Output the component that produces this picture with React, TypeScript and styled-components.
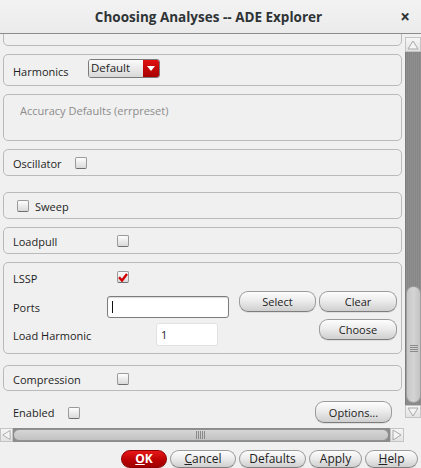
import React from "react";
import styled, { createGlobalStyle } from "styled-components";

const Global = createGlobalStyle`
  html, body { margin: 0; padding: 0; }
  body { background: #efefef; font-family: "Open Sans", "Noto Sans", sans-serif; }
`;

const Window = styled.div`
  width: 421px;
  height: 468px;
  display: flex;
  flex-direction: column;
  background: #f0f0f0;
  overflow: hidden;
  color: #1e1e1e;
`;

const TitleBar = styled.div`
  flex: none;
  height: 33px;
  display: grid;
  grid-template-columns: 1fr auto 1fr;
  align-items: center;
  background: linear-gradient(#f3f3f3, #ebebeb);
  border-bottom: 1px solid #8c8c8c;
`;

const Title = styled.div`
  grid-column: 2;
  font-size: 13.5px;
  font-weight: 700;
  color: #2e3436;
  margin-right: 4px;
`;

const Close = styled.div`
  justify-self: end;
  margin-right: 11px;
  font-size: 17px;
  font-weight: 700;
  color: #2e3436;
  line-height: 1;
`;

const Body = styled.div`
  flex: none;
  height: 394px;
  display: flex;
`;

const Viewport = styled.div`
  flex: 1;
  overflow: hidden;
  padding: 0 2px 0 3px;
`;

const Content = styled.div`
  margin-top: -19px;
  display: flex;
  flex-direction: column;
`;

const Frame = styled.div<{ $h: number; $mt?: number; $pl?: number; $align?: string }>`
  box-sizing: border-box;
  height: ${(p) => p.$h}px;
  margin-top: ${(p) => p.$mt ?? 8}px;
  border: 1px solid #bababa;
  border-radius: 5px;
  padding-left: ${(p) => p.$pl ?? 9}px;
  display: flex;
  align-items: ${(p) => p.$align ?? "center"};
`;

const FrameCol = styled.div`
  box-sizing: border-box;
  height: 92px;
  margin-top: 8px;
  border: 1px solid #bababa;
  border-radius: 5px;
  padding: 4px 0 0 9px;
  display: flex;
  flex-direction: column;
`;

const Label = styled.span<{ $w?: number; $mt?: number; $ml?: number }>`
  flex: none;
  font-size: 11px;
  line-height: 16px;
  width: ${(p) => (p.$w ? `${p.$w}px` : "auto")};
  margin-top: ${(p) => p.$mt ?? 0}px;
  margin-left: ${(p) => p.$ml ?? 0}px;
  white-space: nowrap;
`;

const Hint = styled.span`
  font-size: 11px;
  line-height: 16px;
  color: #8c8c8c;
  margin-top: 8px;
`;

const Box = styled.span<{ $ml?: number; $mt?: number }>`
  box-sizing: border-box;
  flex: none;
  width: 12px;
  height: 12px;
  margin-left: ${(p) => p.$ml ?? 0}px;
  margin-top: ${(p) => p.$mt ?? 0}px;
  border: 1px solid #9a9a9a;
  border-bottom-color: #6e6e6e;
  border-radius: 2px;
  background: linear-gradient(#fdfdfd, #d9d9d9);
  display: flex;
  align-items: center;
  justify-content: center;
`;

const Check = ({ checked, ml, mt }: { checked?: boolean; ml?: number; mt?: number }) => (
  <Box $ml={ml} $mt={mt}>
    {checked && (
      <svg width="10" height="9" viewBox="0 0 10 9">
        <path d="M1 4.2 L4 7.5 L9 1" fill="none" stroke="#d00000" strokeWidth="2.4" />
      </svg>
    )}
  </Box>
);

const Combo = styled.div`
  box-sizing: border-box;
  display: flex;
  width: 72px;
  height: 19px;
  border: 1px solid #7a7a7a;
  border-radius: 3px;
  overflow: hidden;
`;

const ComboText = styled.span`
  flex: 1;
  font-size: 11.5px;
  line-height: 16px;
  padding-left: 2px;
  background: linear-gradient(#fbfbfb, #d8d8d8);
`;

const ComboArrow = styled.span`
  width: 16px;
  background: linear-gradient(#e01010, #a80000);
  display: flex;
  align-items: center;
  justify-content: center;
`;

const Row = styled.div<{ $h: number }>`
  display: flex;
  height: ${(p) => p.$h}px;
  align-items: flex-start;
`;

const Input = styled.div<{ $w: number; $h: number; $mt?: number; $strong?: boolean }>`
  box-sizing: border-box;
  flex: none;
  width: ${(p) => p.$w}px;
  height: ${(p) => p.$h}px;
  margin-top: ${(p) => p.$mt ?? 0}px;
  background: #fff;
  border: 1px solid ${(p) => (p.$strong ? "#7c7c7c" : "#e2e2e2")};
  border-radius: 3px;
  box-shadow: ${(p) => (p.$strong ? "inset 0 1px 1px rgba(0,0,0,0.15)" : "none")};
  font-size: 11px;
  line-height: 18px;
  padding-left: 4px;
  display: flex;
  align-items: center;
`;

const Caret = styled.span`
  width: 1px;
  height: 12px;
  background: #111;
`;

const Button = styled.button<{ $w: number; $h?: number; $ml?: number; $mt?: number }>`
  box-sizing: border-box;
  flex: none;
  width: ${(p) => p.$w}px;
  height: ${(p) => p.$h ?? 21}px;
  margin-left: ${(p) => p.$ml ?? 0}px;
  margin-top: ${(p) => p.$mt ?? 0}px;
  padding: 0;
  border: 1px solid #9b9b9b;
  border-bottom-color: #7d7d7d;
  border-radius: 9px;
  background: linear-gradient(#fdfdfd 0%, #ececec 45%, #cfcfcf 100%);
  box-shadow: 0 1px 0 rgba(0, 0, 0, 0.08);
  font-family: "Open Sans", sans-serif;
  font-size: 11px;
  color: #222;
`;

const BarButton = styled(Button)<{ $ok?: boolean }>`
  font-size: 12px;
  line-height: 16px;
  ${(p) =>
    p.$ok
      ? `background: linear-gradient(#e81818, #b80000 60%, #a00000);
         border-color: #8a0000;
         color: #fff;
         font-weight: 700;`
      : ""}
`;

const EnabledRow = styled.div`
  display: flex;
  align-items: center;
  height: 22px;
  margin-top: 10px;
  padding: 0 10px;
`;

const Spacer = styled.div`
  flex: 1;
`;

const VScroll = styled.div`
  flex: none;
  width: 16px;
  margin-left: 1px;
  padding: 3px 0 10px;
  display: flex;
  flex-direction: column;
`;

const Arrow = styled.div<{ $w?: number; $h?: number }>`
  box-sizing: border-box;
  flex: none;
  width: ${(p) => p.$w ?? 16}px;
  height: ${(p) => p.$h ?? 15}px;
  background: linear-gradient(#f6f6f6, #e2e2e2);
  border: 1px solid #c4c4c4;
  display: flex;
  align-items: center;
  justify-content: center;
`;

const VTrough = styled.div`
  flex: 1;
  background: repeating-linear-gradient(90deg, #8e8e8e 0 1px, #878787 1px 2px);
  display: flex;
  flex-direction: column;
  justify-content: flex-end;
  border-left: 1px solid #7c7c7c;
`;

const VThumb = styled.div`
  box-sizing: border-box;
  height: 117px;
  margin-bottom: 2px;
  border: 1px solid #a0a0a0;
  border-radius: 8px;
  background: linear-gradient(90deg, #c6c6c6, #d4d4d4 50%, #c4c4c4);
  display: flex;
  align-items: center;
  justify-content: center;
  padding-top: 9px;
`;

const HRow = styled.div`
  flex: none;
  height: 14px;
  display: flex;
`;

const HScroll = styled.div`
  width: 404px;
  display: flex;
`;

const HTrough = styled.div`
  flex: 1;
  background: #8c8c8c;
  display: flex;
  padding: 1px 1px 1px 0;
`;

const HThumb = styled.div`
  box-sizing: border-box;
  flex: 1;
  border: 1px solid #8f8f8f;
  border-radius: 7px;
  background: linear-gradient(#d6d6d6, #c2c2c2);
  display: flex;
  align-items: center;
  justify-content: center;
`;

const ButtonBar = styled.div`
  flex: 1;
  display: flex;
  justify-content: flex-end;
  align-items: flex-start;
  gap: 3px;
  padding: 8px 3px 0 0;
`;

const Grip = ({ vertical }: { vertical?: boolean }) =>
  vertical ? (
    <svg width="8" height="8" viewBox="0 0 8 8">
      {[1, 3, 5, 7].map((y) => (
        <line key={y} x1="0" x2="8" y1={y - 0.5} y2={y - 0.5} stroke="#8a8a8a" strokeWidth="1" />
      ))}
    </svg>
  ) : (
    <svg width="10" height="8" viewBox="0 0 10 8">
      {[1, 3, 5, 7, 9].map((x) => (
        <line key={x} y1="0" y2="8" x1={x - 0.5} x2={x - 0.5} stroke="#8a8a8a" strokeWidth="1" />
      ))}
    </svg>
  );

const Tri = ({ dir }: { dir: "up" | "down" | "left" | "right" }) => {
  const pts = {
    up: "1,10 6,2 11,10",
    down: "1,2 6,10 11,2",
    left: "10,1 2,6 10,11",
    right: "2,1 10,6 2,11",
  }[dir];
  return (
    <svg width="12" height="12" viewBox="0 0 12 12">
      <polygon points={pts} fill="#f4f4f4" stroke="#a8a8a8" strokeWidth="1" />
    </svg>
  );
};

export default function App() {
  return (
    <>
      <Global />
      <Window>
        <TitleBar>
          <Title>Choosing Analyses -- ADE Explorer</Title>
          <Close>×</Close>
        </TitleBar>
        <Body>
          <Viewport>
            <Content>
              <Frame $h={31} $mt={0} />
              <Frame $h={32} $align="flex-start" style={{ paddingTop: 4 }}>
                <Label $w={75} $mt={5}>Harmonics</Label>
                <Combo>
                  <ComboText>Default</ComboText>
                  <ComboArrow>
                    <svg width="8" height="5" viewBox="0 0 8 5">
                      <polygon points="0,0 8,0 4,5" fill="#fff" />
                    </svg>
                  </ComboArrow>
                </Combo>
              </Frame>
              <Frame $h={47} $pl={16} $align="flex-start">
                <Hint>Accuracy Defaults (errpreset)</Hint>
              </Frame>
              <Frame $h={27}>
                <Label $w={62} $mt={3}>Oscillator</Label>
                <Check mt={1} />
              </Frame>
              <Frame $h={27} $mt={16} $pl={13}>
                <Check mt={1} />
                <Label $mt={3} $ml={6}>Sweep</Label>
              </Frame>
              <Frame $h={27}>
                <Label $w={104} $mt={3}>Loadpull</Label>
                <Check mt={1} />
              </Frame>
              <FrameCol>
                <Row $h={24}>
                  <Label $w={104} $mt={4}>LSSP</Label>
                  <Check checked mt={4} />
                </Row>
                <Row $h={28}>
                  <Label $w={94} $mt={9}>Ports</Label>
                  <Input $w={122} $h={22} $mt={5} $strong>
                    <Caret />
                  </Input>
                  <Button $w={77} $ml={10}>Select</Button>
                  <Button $w={78} $ml={3}>Clear</Button>
                </Row>
                <Row $h={26}>
                  <Label $w={143} $mt={9}>Load Harmonic</Label>
                  <Input $w={62} $h={23} $mt={4}>1</Input>
                  <Button $w={78} $ml={101}>Choose</Button>
                </Row>
              </FrameCol>
              <Frame $h={26} $mt={11}>
                <Label $w={104} $mt={3}>Compression</Label>
                <Check mt={1} />
              </Frame>
              <EnabledRow>
                <Label $w={55} $mt={2}>Enabled</Label>
                <Check mt={1} />
                <Spacer />
                <Button $w={77} $h={22}>Options...</Button>
              </EnabledRow>
            </Content>
          </Viewport>
          <VScroll>
            <Arrow>
              <Tri dir="up" />
            </Arrow>
            <VTrough>
              <VThumb>
                <Grip vertical />
              </VThumb>
            </VTrough>
            <Arrow $h={13}>
              <Tri dir="down" />
            </Arrow>
          </VScroll>
        </Body>
        <HRow>
          <HScroll>
            <Arrow $w={13} $h={14}>
              <Tri dir="left" />
            </Arrow>
            <HTrough>
              <HThumb>
                <Grip />
              </HThumb>
            </HTrough>
            <Arrow $w={14} $h={14}>
              <Tri dir="right" />
            </Arrow>
          </HScroll>
        </HRow>
        <ButtonBar>
          <BarButton $w={46} $h={18} $ok>
            <u>O</u>K
          </BarButton>
          <BarButton $w={66} $h={18}>
            <u>C</u>ancel
          </BarButton>
          <BarButton $w={67} $h={18}>Defaults</BarButton>
          <BarButton $w={53} $h={18}>Apply</BarButton>
          <BarButton $w={53} $h={18}>
            <u>H</u>elp
          </BarButton>
        </ButtonBar>
      </Window>
    </>
  );
}
